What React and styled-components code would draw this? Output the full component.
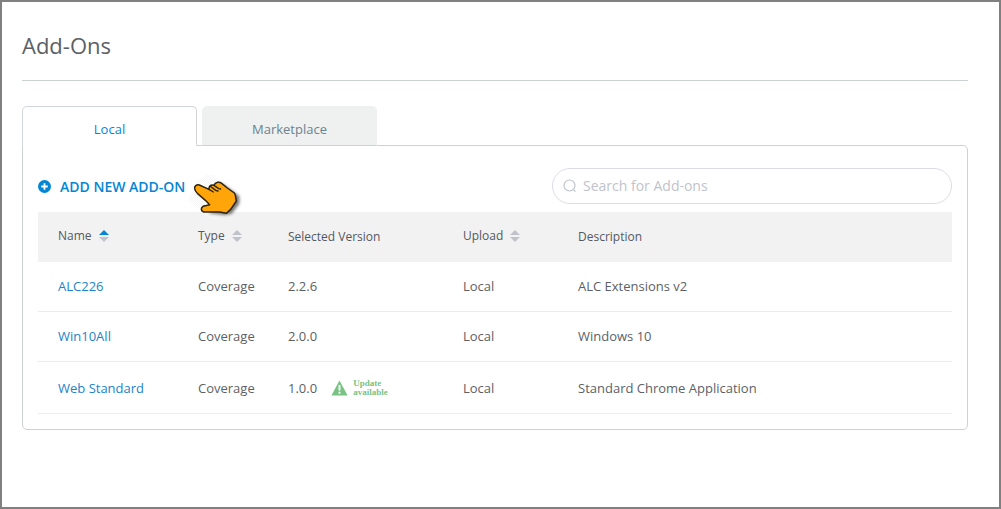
import React, { useState } from "react";
import styled, { createGlobalStyle } from "styled-components";

const GlobalStyle = createGlobalStyle`
  :root {
    --blue: #0586d3;
    --text: #5c5f66;
    --line: #cbd2d2;
    --soft-line: #dcdce6;
  }

  * {
    box-sizing: border-box;
    margin: 0;
    padding: 0;
  }

  body {
    font-family: "Open Sans", "Noto Sans", sans-serif;
    font-size: 13px;
    color: var(--text);
    background: #ffffff;
  }

  button, input {
    font-family: inherit;
  }
`;

const Page = styled.main`
  min-height: 100vh;
  padding: 27px 31px 28px 20px;
  border: 2px solid #808080;
`;

const Title = styled.h1`
  height: 52px;
  font-size: 22px;
  font-weight: 400;
  line-height: 32px;
  border-bottom: 1px solid var(--line);
`;

// Tabs
const TabList = styled.div`
  display: flex;
  gap: 5px;
  margin-top: 25px;
`;

const Tab = styled.button`
  width: 175px;
  height: 40px;
  margin-bottom: -1px;
  padding-top: 6px;
  font-size: 13px;
  cursor: pointer;
  color: ${({ $active }) => ($active ? "var(--blue)" : "#6c8290")};
  background: ${({ $active }) => ($active ? "#ffffff" : "#eff1f1")};
  border: 1px solid ${({ $active }) => ($active ? "#d2d5da" : "#eff1f1")};
  border-bottom-color: ${({ $active }) => ($active ? "#ffffff" : "var(--line)")};
  border-radius: 5px 5px 0 0;
  z-index: 1;
`;

const Panel = styled.section`
  padding: 22px 15px 15px;
  border: 1px solid var(--line);
  border-radius: 0 5px 5px 5px;
`;

const Toolbar = styled.div`
  display: flex;
  align-items: center;
  justify-content: space-between;
  margin-bottom: 8px;
`;

const AddButton = styled.button`
  position: relative;
  display: flex;
  align-items: center;
  gap: 9px;
  padding-top: 2px;
  font-size: 14px;
  font-weight: 600;
  line-height: 20px;
  color: var(--blue);
  background: none;
  border: none;
  cursor: pointer;
`;

const PlusSvg = styled.svg`
  margin-bottom: 2px;
`;

// The hand lies over the toolbar and the table head
const Pointer = styled.svg`
  position: absolute;
  top: 0;
  left: 100%;
  width: 65px;
  height: 45px;
  pointer-events: none;
`;

const SearchBox = styled.label`
  display: flex;
  align-items: center;
  gap: 6px;
  width: 400px;
  height: 36px;
  padding: 0 10px;
  border: 1px solid var(--soft-line);
  border-radius: 18px;
`;

const SearchInput = styled.input`
  flex: 1;
  min-width: 0;
  padding-bottom: 2px;
  font-size: 14px;
  color: var(--text);
  background: none;
  border: none;
  outline: none;

  &::placeholder {
    color: #bfc3cc;
    opacity: 1;
  }
`;

// Table
const Table = styled.table`
  width: 100%;
  table-layout: fixed;
  border-collapse: separate;
  border-spacing: 0;
`;

const Col = styled.col`
  width: ${({ $width }) => $width};
`;

const HeadCell = styled.th`
  height: 50px;
  padding-bottom: ${({ $sortable }) => ($sortable ? "4px" : "2px")};
  padding-left: ${({ $first }) => ($first ? "20px" : "0")};
  font-size: 12px;
  font-weight: 500;
  text-align: left;
  color: #55585e;
  background: #f2f2f2;
`;

const SortButton = styled.button`
  display: flex;
  align-items: center;
  gap: 7px;
  font-size: 12px;
  font-weight: 500;
  color: inherit;
  background: none;
  border: none;
  cursor: pointer;
`;

const SortSvg = styled.svg`
  margin-top: 2px;
`;

const Cell = styled.td`
  height: ${({ $tall }) => ($tall ? "52px" : "50px")};
  padding-bottom: ${({ $tall }) => ($tall ? "0" : "2px")};
  padding-left: ${({ $first }) => ($first ? "20px" : "0")};
  border-bottom: 1px solid #ebebf2;
`;

const NameLink = styled.a`
  color: #1c83cb;
  text-decoration: none;
`;

const Version = styled.div`
  display: flex;
  align-items: center;
  gap: 14px;
`;

const Update = styled.span`
  display: flex;
  align-items: center;
  gap: 5px;
  font-family: "Liberation Serif", serif;
  font-size: 9px;
  font-weight: 700;
  line-height: 9px;
  color: #78c384;
`;

const columns = [
  { key: "name", label: "Name", width: "160px", sortable: true },
  { key: "type", label: "Type", width: "90px", sortable: true },
  { key: "version", label: "Selected Version", width: "175px" },
  { key: "upload", label: "Upload", width: "115px", sortable: true },
  { key: "description", label: "Description", width: "auto" },
];

const addons = [
  { name: "ALC226", version: "2.2.6", description: "ALC Extensions v2" },
  { name: "Win10All", version: "2.0.0", description: "Windows 10" },
  {
    name: "Web Standard",
    version: "1.0.0",
    description: "Standard Chrome Application",
    update: true,
  },
];

const PlusIcon = () => (
  <PlusSvg width="13" height="13" viewBox="0 0 13 13" aria-hidden="true">
    <circle cx="6.5" cy="6.5" r="6.5" fill="#0586d3" />
    <path d="M6.5 3.2v6.6M3.2 6.5h6.6" stroke="#fff" strokeWidth="1.8" />
  </PlusSvg>
);

const SearchIcon = () => (
  <svg width="14" height="14" viewBox="0 0 14 14" aria-hidden="true">
    <g fill="none" stroke="#bfc3cc" strokeWidth="1.2">
      <circle cx="6.5" cy="6.5" r="5.5" />
      <path d="M10.2 10.4l2.3 2.2" />
    </g>
  </svg>
);

const SortIcon = ({ active }) => (
  <SortSvg width="10" height="12" viewBox="0 0 10 12" aria-hidden="true">
    <path d="M0 5l5-5 5 5z" fill={active ? "#0586d3" : "#c0c3cb"} />
    <path d="M0 7h10l-5 5z" fill="#c0c3cb" />
  </SortSvg>
);

const WarningIcon = () => (
  <svg width="17" height="16" viewBox="0 0 17 16" aria-hidden="true">
    <path d="M8.5 0.5L16.6 15.5H0.4z" fill="#78c384" />
    <path d="M8.5 5v5.4M8.5 11.8v2" stroke="#fff" strokeWidth="1.9" />
  </svg>
);

const HandPointer = () => (
  <Pointer viewBox="0 0 195 135" aria-hidden="true">
    <defs>
      <pattern id="dots" width="6" height="6" patternUnits="userSpaceOnUse">
        <path d="M0 0h3v3H0zM3 3h3v3H3z" fill="#f6f6f6" />
      </pattern>
      <filter id="soft" x="-20%" y="-20%" width="140%" height="140%">
        <feGaussianBlur stdDeviation="4" />
      </filter>
    </defs>
    <path d="M78 -8L168 68 92 144 10 76 34 18z" fill="url(#dots)" />
    <path
      d="M112 26L140 46 163 64 163 86 140 116 118 120 70 114 110 90z"
      fill="#555"
      opacity="0.8"
      filter="url(#soft)"
    />
    <path
      d="M29 41C28 33 34 28 43 30L72 43C71 34 77 28 86 31C92 21 103 19 110 25L127 39 148 54C153 59 151 68 154 78L137 103 124 115 104 111 56 111C47 108 47 99 54 94L74 89 61 76 37 55C32 50 30 47 29 41Z"
      fill="#ffa50a"
      stroke="#2b2413"
      strokeWidth="4.5"
      strokeLinejoin="round"
    />
    <path
      d="M72 43L85 51M76 34L92 46 99 48M87 31L101 41 107 42"
      fill="none"
      stroke="#2b2413"
      strokeWidth="4"
      strokeLinecap="round"
    />
  </Pointer>
);

const App = () => {
  const [tab, setTab] = useState("Local");
  const [keyword, setKeyword] = useState("");
  const [sortKey, setSortKey] = useState("name");

  const rows = addons.filter(({ name }) =>
    name.toLowerCase().includes(keyword.toLowerCase())
  );

  return (
    <>
      <GlobalStyle />
      <Page>
        <Title>Add-Ons</Title>
        <TabList role="tablist">
          {["Local", "Marketplace"].map((name) => (
            <Tab
              key={name}
              type="button"
              role="tab"
              aria-selected={tab === name}
              $active={tab === name}
              onClick={() => setTab(name)}
            >
              {name}
            </Tab>
          ))}
        </TabList>
        <Panel>
          <Toolbar>
            <AddButton type="button">
              <PlusIcon />
              ADD NEW ADD-ON
              <HandPointer />
            </AddButton>
            <SearchBox>
              <SearchIcon />
              <SearchInput
                type="text"
                aria-label="Search for Add-ons"
                placeholder="Search for Add-ons"
                value={keyword}
                onChange={(e) => setKeyword(e.target.value)}
              />
            </SearchBox>
          </Toolbar>
          <Table>
            <colgroup>
              {columns.map(({ key, width }) => (
                <Col key={key} $width={width} />
              ))}
            </colgroup>
            <thead>
              <tr>
                {columns.map(({ key, label, sortable }, i) => (
                  <HeadCell key={key} $first={i === 0} $sortable={sortable}>
                    {sortable ? (
                      <SortButton type="button" onClick={() => setSortKey(key)}>
                        {label}
                        <SortIcon active={sortKey === key} />
                      </SortButton>
                    ) : (
                      label
                    )}
                  </HeadCell>
                ))}
              </tr>
            </thead>
            <tbody>
              {rows.map(({ name, version, description, update }) => (
                <tr key={name}>
                  <Cell $first $tall={update}>
                    <NameLink href="#">{name}</NameLink>
                  </Cell>
                  <Cell $tall={update}>Coverage</Cell>
                  <Cell $tall={update}>
                    <Version>
                      {version}
                      {update && (
                        <Update>
                          <WarningIcon />
                          <span>
                            Update
                            <br />
                            available
                          </span>
                        </Update>
                      )}
                    </Version>
                  </Cell>
                  <Cell $tall={update}>Local</Cell>
                  <Cell $tall={update}>{description}</Cell>
                </tr>
              ))}
            </tbody>
          </Table>
        </Panel>
      </Page>
    </>
  );
};

export default App;
